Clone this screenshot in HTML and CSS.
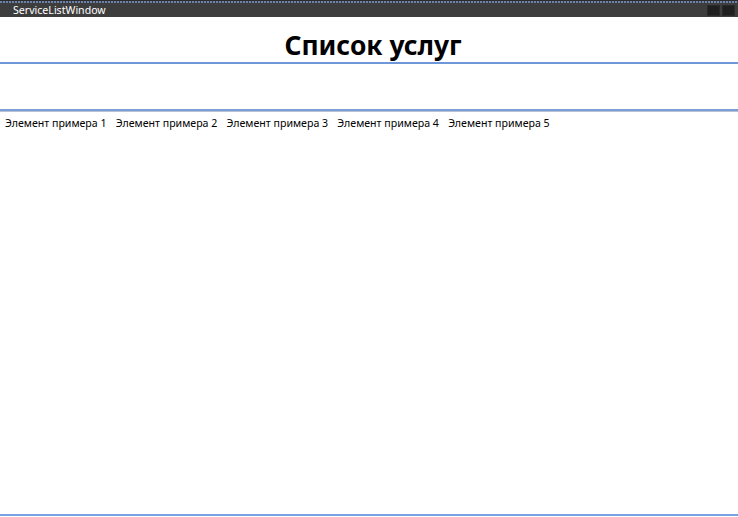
FILE: index.html
```html
<!DOCTYPE html>
<html lang="ru">
<head>
<meta charset="utf-8">
<title>ServiceListWindow</title>
<link rel="stylesheet" href="styles.css">
</head>
<body>
<div class="window">
  <div class="titlebar">
    <span class="title-text">ServiceListWindow</span>
    <div class="title-buttons">
      <span class="tbtn"></span>
      <span class="tbtn"></span>
    </div>
  </div>
  <header class="header">
    <h1 class="heading">Список услуг</h1>
  </header>
  <div class="filter-box"></div>
  <ul class="items">
    <li class="item">Элемент примера 1</li>
    <li class="item">Элемент примера 2</li>
    <li class="item">Элемент примера 3</li>
    <li class="item">Элемент примера 4</li>
    <li class="item">Элемент примера 5</li>
  </ul>
  <div class="footer-line"></div>
</div>
</body>
</html>
```
FILE: styles.css
```css
html, body {
  margin: 0;
  padding: 0;
  height: 100%;
  background: #ffffff;
}
body {
  font-family: "Noto Sans", "Open Sans", sans-serif;
  color: #000;
}
.window {
  display: flex;
  flex-direction: column;
  height: 517px;
  overflow: hidden;
}
.titlebar {
  height: 17px;
  flex: none;
  display: flex;
  align-items: flex-end;
  justify-content: space-between;
  background:
    repeating-linear-gradient(90deg, #6d82a8 0 2px, #3b3f47 2px 3px) top / 100% 2px no-repeat,
    #3d3d3d;
  border-top: 1px solid #2b2b2b;
  box-sizing: border-box;
}
.title-text {
  color: #ffffff;
  font-size: 10.6px;
  line-height: 14px;
  padding-left: 13px;
}
.title-buttons {
  display: flex;
  gap: 2px;
  padding-right: 3px;
  padding-bottom: 1px;
}
.tbtn {
  width: 11px;
  height: 9px;
  background: #1f1f1f;
  border: 1px solid #2a2a2a;
}
.header {
  height: 45px;
  flex: none;
  display: flex;
  align-items: center;
  justify-content: center;
  border-bottom: 2px solid #6f96d8;
  padding-left: 8px;
}
.heading {
  margin: 0;
  font-size: 26.4px;
  font-weight: 700;
  line-height: 32px;
  padding-top: 10px;
}
.filter-box {
  height: 45px;
  flex: none;
  border-bottom: 2px solid #7a9fd8;
  box-shadow: 0 1px 0 #b8c2d2;
}
.items {
  list-style: none;
  margin: 0;
  padding: 5px 0 0 5px;
  display: flex;
  gap: 9.25px;
  flex: 1;
  align-items: flex-start;
}
.item {
  font-size: 10.6px;
  line-height: 14px;
}
.footer-line {
  height: 2px;
  flex: none;
  background: #7aa1e0;
  margin-bottom: 1px;
}
```
